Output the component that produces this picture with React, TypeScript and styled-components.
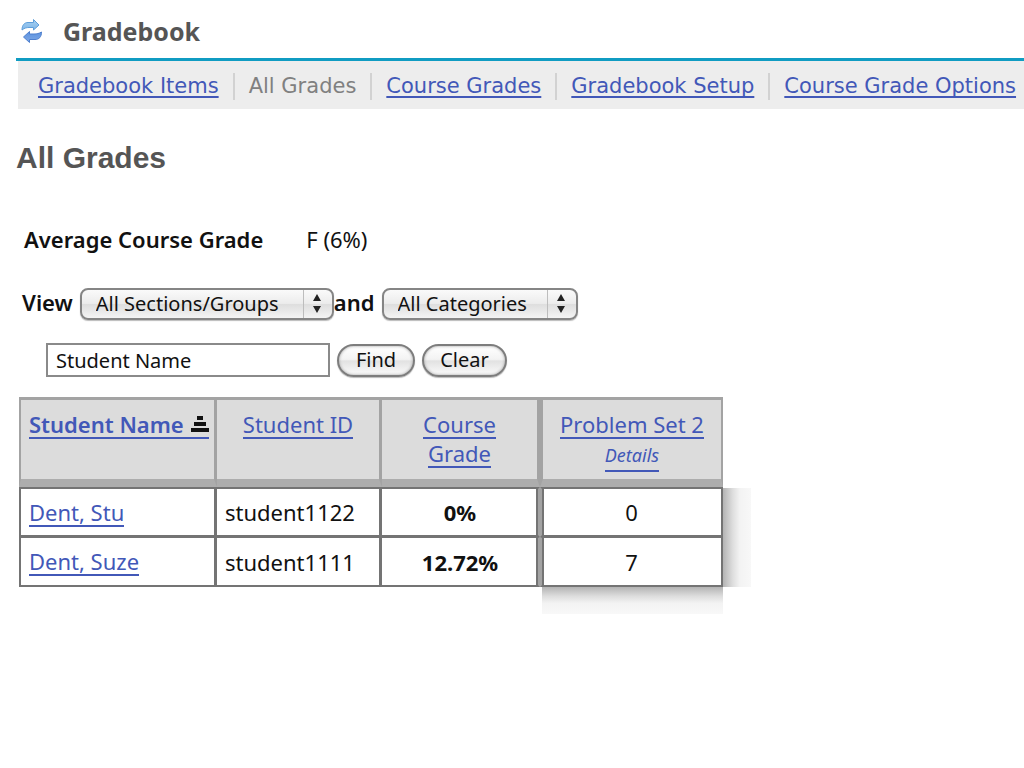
import React from "react";
import styled, { createGlobalStyle } from "styled-components";

const human = `"Noto Sans", "Open Sans", sans-serif`;
const verdana = `"DejaVu Sans", sans-serif`;
const link = "#4258b8";

const GlobalStyle = createGlobalStyle`
  * { box-sizing: border-box; }
  body {
    margin: 0;
    background: #fff;
    color: #111;
    font-family: ${human};
    font-size: 22px;
    line-height: 28px;
  }
`;

const Page = styled.div`
  padding: 0 0 40px 16px;
`;

const Header = styled.header`
  display: flex;
  align-items: center;
  gap: 20px;
  height: 61px;
  padding: 4px 4px 0;
  border-bottom: 3px solid #109cc2;
`;

const ToolTitle = styled.h1`
  margin: 0;
  color: #555;
  font: bold 25px/32px ${human};
`;

const Nav = styled.nav`
  display: flex;
  align-items: center;
  height: 48px;
  margin-left: 2px;
  padding: 2px 0 0 20px;
  background: #ededed;
`;

const NavItem = styled.span`
  padding-right: 14px;
  margin-right: 14px;
  border-right: 2px solid #d2d2d2;
  color: #808080;
  font: 21px/27px ${verdana};
  white-space: nowrap;
  &:last-child { border-right: 0; margin-right: 0; padding-right: 0; }
`;

const NavLink = styled.a`
  color: ${link};
  text-decoration: underline;
  text-decoration-thickness: 2px;
  text-underline-offset: 3px;
  text-decoration-skip-ink: none;
`;

const PageTitle = styled.h2`
  margin: 32px 0 0;
  color: #555;
  font: bold 30px/34px "Liberation Sans", sans-serif;
`;

const Summary = styled.dl`
  display: flex;
  gap: 43px;
  margin: 50px 0 0;
  padding-left: 8px;
`;

const Term = styled.dt`
  font-weight: 600;
`;

const Value = styled.dd`
  margin: 0;
`;

const Filters = styled.form`
  margin: 0;
`;

const FilterRow = styled.div`
  display: flex;
  align-items: center;
  height: 34px;
  margin-top: 34px;
  padding-left: 6px;
`;

const FilterLabel = styled.label`
  padding: 0 7px 4px 0;
  font-weight: 600;
`;

const SelectBox = styled.span<{ $width: number }>`
  position: relative;
  display: flex;
  width: ${(p) => p.$width}px;
  svg {
    position: absolute;
    top: 5px;
    right: 11px;
    pointer-events: none;
  }
  &::after {
    content: "";
    position: absolute;
    top: 2px;
    right: 30px;
    width: 1px;
    height: 28px;
    background: #bdbdbd;
  }
`;

const Select = styled.select`
  appearance: none;
  width: 100%;
  height: 32px;
  padding: 0 32px 0 14px;
  border: 2px solid #858585;
  border-radius: 8px;
  background: linear-gradient(#fafafa, #ececec 48%, #dedede 52%, #f4f4f4);
  box-shadow: 0 1px 1px #bbb;
  color: #111;
  font: 20px/26px ${human};
`;

const SearchRow = styled.div`
  display: flex;
  align-items: center;
  gap: 7px;
  margin-top: 22px;
  padding-left: 30px;
`;

const SearchInput = styled.input`
  width: 284px;
  height: 34px;
  padding: 0 8px;
  border: 2px solid #8a8a8a;
  border-radius: 0;
  background: #fff;
  color: #111;
  font: 20px/26px ${human};
`;

const Button = styled.button<{ $width: number }>`
  width: ${(p) => p.$width}px;
  height: 33px;
  padding: 0;
  border: 2px solid #7d7d7d;
  border-radius: 17px;
  background: linear-gradient(#fff, #f3f3f3 46%, #e2e2e2 52%, #fbfbfb);
  box-shadow: 0 1px 1px #bbb, inset 0 0 3px #999;
  color: #111;
  font: 20px/26px ${human};
`;

const Grades = styled.table`
  table-layout: fixed;
  width: 704px;
  margin: 20px 0 0 3px;
  border-collapse: separate;
  border-spacing: 0;
`;

const Col = styled.col<{ $width: number }>`
  width: ${(p) => p.$width}px;
`;

const HeadCell = styled.th`
  height: 90px;
  padding: 10px 8px 0;
  border: solid #a3a3a3;
  border-width: 3px 3px 8px 0;
  border-bottom-color: #adadad;
  background: #dcdcdc;
  font-weight: 400;
  line-height: 29px;
  text-align: center;
  vertical-align: top;
  &:first-child { border-left-width: 2px; text-align: left; }
  &:last-child { border-left-width: 3px; border-right-width: 2px; }
`;

const Cell = styled.td<{ $align?: string; $bold?: boolean }>`
  height: 50px;
  padding: 0 8px;
  border: solid #747474;
  border-width: 1px 3px 2px 0;
  background: #fff;
  font-weight: ${(p) => (p.$bold ? 700 : 400)};
  text-align: ${(p) => p.$align ?? "left"};
  tr:first-child > & { border-top-width: 2px; }
  &:first-child { border-left-width: 2px; }
  &:nth-child(3) {
    border-right: 2px solid #a3a3a3;
    box-shadow: inset -2px 0 #747474;
  }
  &:last-child {
    position: relative;
    border-left: 2px solid #a3a3a3;
    border-right-width: 2px;
    box-shadow: inset 2px 0 #747474;
  }
  &:last-child::after {
    content: "";
    position: absolute;
    top: -1px;
    left: 100%;
    width: 28px;
    height: 50px;
    margin-left: 2px;
    background: linear-gradient(to right, #b4b4b4, #dedede 35%, #f3f3f3 60%, #f8f8f8);
  }
  tr:last-child > &:last-child::before {
    content: "";
    position: absolute;
    top: 100%;
    left: 0;
    right: -2px;
    height: 27px;
    margin-top: 2px;
    background: linear-gradient(#b4b4b4, #dedede 35%, #f3f3f3 60%, #f8f8f8);
  }
`;

const TableLink = styled.a<{ $active?: boolean }>`
  display: inline-block;
  height: 27px;
  border-bottom: 2px solid ${link};
  color: ${link};
  font-weight: ${(p) => (p.$active ? 600 : 400)};
  line-height: 24px;
  text-decoration: none;
  white-space: nowrap;
`;

const HeadLine = styled.span`
  display: block;
`;

const DetailsLink = styled(TableLink)`
  height: 31px;
  font-size: 18px;
  font-style: italic;
  line-height: 28px;
`;

const SortMark = styled.svg`
  margin-left: 7px;
`;

const Arrows = () => (
  <svg width="12" height="22" viewBox="0 0 12 22" aria-hidden="true">
    <path d="M6 1 L10 8 H2 Z M6 20 L10 13 H2 Z" fill="#222" />
  </svg>
);

const ResetIcon = () => (
  <svg width="23" height="26" viewBox="0 0 23 26" aria-hidden="true">
    <defs>
      <linearGradient id="up" x1="0" y1="0" x2="0" y2="1">
        <stop offset="0" stopColor="#a5d0f2" />
        <stop offset="1" stopColor="#7fb6e8" />
      </linearGradient>
      <linearGradient id="down" x1="0" y1="0" x2="0" y2="1">
        <stop offset="0" stopColor="#5c93e0" />
        <stop offset="1" stopColor="#7ea8e6" />
      </linearGradient>
    </defs>
    <path
      d="M2 12 C2 7 4.500 4.500 8 4.500 H13.500 V1.500 L19 7 L13.500 12 V9.500 H9 C6.500 9.500 4.500 10 2 12 Z"
      fill="url(#up)" stroke="#5d9edb" strokeWidth="1"
    />
    <path
      d="M21.500 14 C21.500 19 19 21.500 15 21.500 H9.500 V24.500 L3.500 19 L9.500 13.500 V16 H14 C17 16 19 15.500 21.500 14 Z"
      fill="url(#down)" stroke="#4f80cf" strokeWidth="1"
    />
  </svg>
);

const navItems = ["Gradebook Items", "All Grades", "Course Grades", "Gradebook Setup", "Course Grade Options"];

const students = [
  { name: "Dent, Stu", id: "student1122", grade: "0%", score: "0" },
  { name: "Dent, Suze", id: "student1111", grade: "12.72%", score: "7" },
];

export default function App() {
  return (
    <Page>
      <GlobalStyle />
      <Header>
        <ResetIcon />
        <ToolTitle>Gradebook</ToolTitle>
      </Header>
      <Nav>
        {navItems.map((item) => (
          <NavItem key={item}>
            {item === "All Grades" ? item : <NavLink href="#">{item}</NavLink>}
          </NavItem>
        ))}
      </Nav>
      <main>
        <PageTitle>All Grades</PageTitle>
        <Summary>
          <Term>Average Course Grade</Term>
          <Value>F (6%)</Value>
        </Summary>
        <Filters onSubmit={(e) => e.preventDefault()}>
          <FilterRow>
            <FilterLabel htmlFor="section">View</FilterLabel>
            <SelectBox $width={254}>
              <Select id="section">
                <option>All Sections/Groups</option>
              </Select>
              <Arrows />
            </SelectBox>
            <FilterLabel htmlFor="category">and</FilterLabel>
            <SelectBox $width={196}>
              <Select id="category">
                <option>All Categories</option>
              </Select>
              <Arrows />
            </SelectBox>
          </FilterRow>
          <SearchRow>
            <SearchInput aria-label="Student Name" defaultValue="Student Name" />
            <Button type="submit" $width={78}>Find</Button>
            <Button type="reset" $width={85}>Clear</Button>
          </SearchRow>
        </Filters>
        <Grades>
          <colgroup>
            <Col $width={198} />
            <Col $width={165} />
            <Col $width={158} />
            <Col $width={183} />
          </colgroup>
          <thead>
            <tr>
              <HeadCell scope="col">
                <HeadLine>
                  <TableLink href="#" $active>
                    Student Name
                    <SortMark width="18" height="17" viewBox="0 0 18 17" aria-hidden="true">
                      <path d="M6 0h6v4H6z M3 6h12v4H3z M0 12h18v4H0z" fill="#111" />
                    </SortMark>
                  </TableLink>
                </HeadLine>
              </HeadCell>
              <HeadCell scope="col">
                <HeadLine><TableLink href="#">Student ID</TableLink></HeadLine>
              </HeadCell>
              <HeadCell scope="col">
                <HeadLine><TableLink href="#">Course</TableLink></HeadLine>
                <HeadLine><TableLink href="#">Grade</TableLink></HeadLine>
              </HeadCell>
              <HeadCell scope="col">
                <HeadLine><TableLink href="#">Problem Set 2</TableLink></HeadLine>
                <DetailsLink href="#">Details</DetailsLink>
              </HeadCell>
            </tr>
          </thead>
          <tbody>
            {students.map((s) => (
              <tr key={s.id}>
                <Cell><TableLink href="#">{s.name}</TableLink></Cell>
                <Cell>{s.id}</Cell>
                <Cell $align="center" $bold>{s.grade}</Cell>
                <Cell $align="center">{s.score}</Cell>
              </tr>
            ))}
          </tbody>
        </Grades>
      </main>
    </Page>
  );
}
